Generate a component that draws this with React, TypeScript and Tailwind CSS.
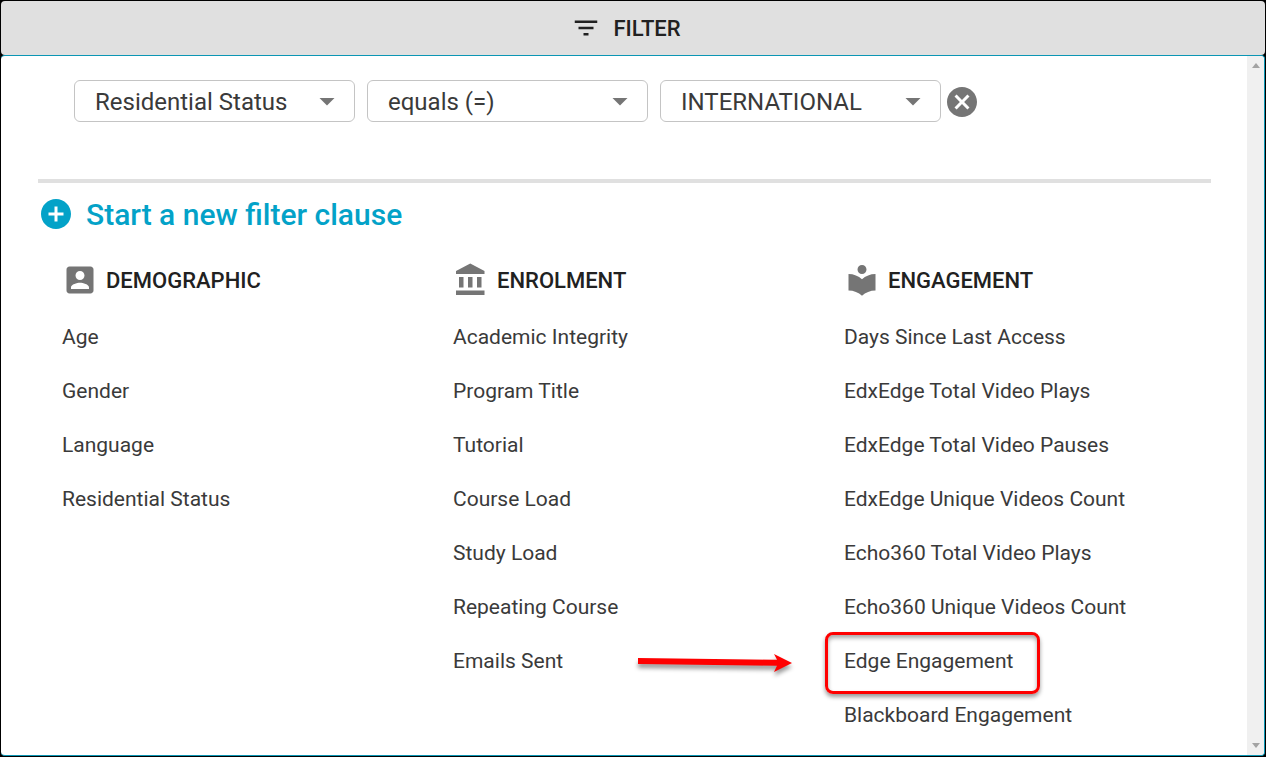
type IconProps = { d: string; className: string };

function Icon({ d, className }: IconProps) {
  return (
    <svg viewBox="0 0 24 24" fill="currentColor" aria-hidden="true" className={className}>
      <path d={d} />
    </svg>
  );
}

const ICONS = {
  filter: "M10 18h4v-2h-4v2zM3 6v2h18V6H3zm3 7h12v-2H6v2z",
  caret: "M7 10l5 5 5-5z",
  cancel:
    "M12 2C6.47 2 2 6.47 2 12s4.47 10 10 10 10-4.47 10-10S17.53 2 12 2zm5 13.59L15.59 17 12 13.41 8.41 17 7 15.59 10.59 12 7 8.41 8.41 7 12 10.59 15.59 7 17 8.41 13.41 12 17 15.59z",
  add: "M12 2C6.48 2 2 6.48 2 12s4.48 10 10 10 10-4.48 10-10S17.52 2 12 2zm5 11h-4v4h-2v-4H7v-2h4V7h2v4h4v2z",
  person:
    "M3 5v14c0 1.1.89 2 2 2h14c1.1 0 2-.9 2-2V5c0-1.1-.9-2-2-2H5c-1.11 0-2 .9-2 2zm12 4c0 1.66-1.34 3-3 3s-3-1.34-3-3 1.34-3 3-3 3 1.34 3 3zm-9 8c0-2 4-3.1 6-3.1s6 1.1 6 3.1v1H6v-1z",
  bank: "M4 10v7h3v-7H4zm6 0v7h3v-7h-3zM2 22h19v-3H2v3zm14-12v7h3v-7h-3zm-4.500-9L2 6v2h19V6l-9.500-5z",
  library:
    "M12 11.550C9.640 9.350 6.480 8 3 8v11c3.480 0 6.640 1.350 9 3.550 2.360-2.190 5.520-3.550 9-3.550V8c-3.480 0-6.640 1.350-9 3.550zM12 8c1.660 0 3-1.340 3-3s-1.340-3-3-3-3 1.340-3 3 1.340 3 3 3z",
};

const SELECTS = [
  { label: "Field", value: "Residential Status" },
  { label: "Operator", value: "equals (=)" },
  { label: "Value", value: "INTERNATIONAL" },
];

const GROUPS = [
  {
    title: "DEMOGRAPHIC",
    icon: ICONS.person,
    items: ["Age", "Gender", "Language", "Residential Status"],
  },
  {
    title: "ENROLMENT",
    icon: ICONS.bank,
    items: [
      "Academic Integrity",
      "Program Title",
      "Tutorial",
      "Course Load",
      "Study Load",
      "Repeating Course",
      "Emails Sent",
    ],
  },
  {
    title: "ENGAGEMENT",
    icon: ICONS.library,
    items: [
      "Days Since Last Access",
      "EdxEdge Total Video Plays",
      "EdxEdge Total Video Pauses",
      "EdxEdge Unique Videos Count",
      "Echo360 Total Video Plays",
      "Echo360 Unique Videos Count",
      "Edge Engagement",
      "Blackboard Engagement",
    ],
  },
];

function FilterSelect({ label, value }: { label: string; value: string }) {
  return (
    <div className="relative w-[281px]">
      <select
        aria-label={label}
        defaultValue={value}
        className="block h-[42px] w-full appearance-none rounded-md border border-[#c4c4c4] bg-white pl-5 pr-12 pt-0.5 text-2xl text-[#3a3a3a]"
      >
        <option>{value}</option>
      </select>
      <Icon
        d={ICONS.caret}
        className="pointer-events-none absolute right-2.5 top-[3px] size-9 text-[#757575]"
      />
    </div>
  );
}

function Callout() {
  return (
    <>
      <span className="pointer-events-none absolute -left-[19px] -right-[27px] -top-[3px] -bottom-[5px] rounded-lg border-3 border-[#fe0000] shadow-[0_3px_4px_rgba(0,0,0,0.4),inset_0_3px_4px_rgba(0,0,0,0.35)]" />
      <svg
        viewBox="0 0 160 32"
        aria-hidden="true"
        className="pointer-events-none absolute right-full top-[11px] mr-12 h-8 w-40 overflow-visible drop-shadow-[0_4px_2px_rgba(0,0,0,0.4)]"
      >
        <path d="M2 12L141 13.700L138 8L156 17L138 26L141 19.800L2 18Z" fill="#fe0000" />
      </svg>
    </>
  );
}

function FilterGroup({ title, icon, items }: (typeof GROUPS)[number]) {
  return (
    <section className="pl-6">
      <h3 className="flex h-9 items-center gap-2 text-[22px] font-medium text-[#212121]">
        <Icon d={icon} className="size-9 shrink-0 text-[#757575]" />
        {title}
      </h3>
      <ul className="mt-[13px]">
        {items.map((item) => (
          <li key={item} className="flex">
            <button type="button" className="relative h-[54px] whitespace-nowrap text-left">
              {item}
              {item === "Edge Engagement" && <Callout />}
            </button>
          </li>
        ))}
      </ul>
    </section>
  );
}

export default function App() {
  return (
    <div className="flex min-h-screen flex-col bg-black p-px font-['Roboto','Liberation_Sans',sans-serif] text-[21px] text-[#3a3a3a]">
      <button
        type="button"
        className="flex h-[54px] items-center justify-center gap-3 rounded bg-[#e0e0e0] pr-3.5 text-[22px] font-medium text-[#212121]"
      >
        <Icon d={ICONS.filter} className="size-[30px]" />
        FILTER
      </button>
      <main className="flex flex-1 rounded border-y border-r border-[#0b96b4] bg-white">
        <div className="flex-1 pb-2 pl-[37px] pr-9 pt-6">
          <div className="flex h-11 items-start pl-9">
            <div className="flex gap-3">
              {SELECTS.map((s) => (
                <FilterSelect key={s.label} {...s} />
              ))}
            </div>
            <button type="button" aria-label="Remove clause" className="ml-[3px] mt-1 text-[#757575]">
              <Icon d={ICONS.cancel} className="size-9" />
            </button>
          </div>
          <hr className="mt-[55px] border-t-4 border-[#e0e0e0]" />
          <button
            type="button"
            className="mt-[13px] flex h-9 items-center gap-3 text-[30px] font-medium text-[#03a2c8]"
          >
            <Icon d={ICONS.add} className="size-9" />
            Start a new filter clause
          </button>
          <div className="mt-[30px] grid grid-cols-3">
            {GROUPS.map((g) => (
              <FilterGroup key={g.title} {...g} />
            ))}
          </div>
        </div>
        <div className="flex w-[17px] flex-col items-center justify-between rounded-r bg-[#f0f0f0] py-[7px]">
          <svg viewBox="0 0 8 5" aria-hidden="true" className="h-[5px] w-2 fill-[#a3a3a3]">
            <path d="M4 0L8 5H0z" />
          </svg>
          <svg viewBox="0 0 8 5" aria-hidden="true" className="h-[5px] w-2 fill-[#a3a3a3]">
            <path d="M0 0H8L4 5z" />
          </svg>
        </div>
      </main>
    </div>
  );
}
